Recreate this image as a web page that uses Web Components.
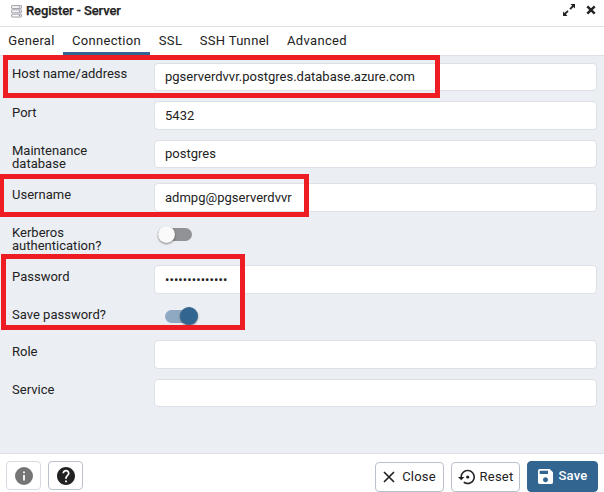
<!DOCTYPE html>
<html lang="en">
<head>
<meta charset="utf-8">
<title>Register - Server</title>
<style>
html,body{margin:0;height:100%;overflow:hidden;background:#fff}
body{font:13px/13px Roboto,sans-serif;letter-spacing:.01px;color:#222}
</style>
</head>
<body>
<register-dialog></register-dialog>
<script>
const define = (name, html, setup) => customElements.define(name, class extends HTMLElement {
  connectedCallback() {
    if (this.shadowRoot) return;
    const t = document.createElement('template');
    t.innerHTML = html;
    this.attachShadow({mode: 'open'}).append(t.content.cloneNode(true));
    if (setup) setup(this, this.shadowRoot);
  }
});

define('dialog-header', `<style>
:host{display:flex;height:26px;border-bottom:1px solid #dde0e6;box-sizing:content-box;align-items:center;padding:0 8px 0 10px;background:#fff}
.t{font-weight:500;margin-left:3px;flex:1;letter-spacing:-.12px;padding-bottom:5px;-webkit-text-stroke:.25px #222}
svg{display:block}
.s{margin-top:-3px}.e{margin:-6px 11px 0 0}.x{margin-top:-6px}
</style>
<svg class="s" width="13" height="13" viewBox="0 0 13 13"><g fill="#e6e6eb" stroke="#a6a6ae"><rect x="1.5" y=".5" width="10" height="3" rx=".6"/><rect x="1.5" y="4.8" width="10" height="3" rx=".6"/><rect x="1.5" y="9.1" width="10" height="3" rx=".6"/></g><path d="M3 2h5M3 6.3h5M3 10.6h5" stroke="#fff"/><path d="M9 2h1M9 6.3h1M9 10.6h1" stroke="#888891"/></svg>
<span class="t"><slot></slot></span>
<svg class="e" width="12" height="12" viewBox="0 0 12 12" fill="#222"><path d="M7.500 0H12v4.500l-1.500-1.500-2.800 2.800-1.300-1.300 2.700-2.800zM4.500 12H0V7.500L1.500 9l2.800-2.800 1.300 1.300L2.900 10.300z"/></svg>
<svg class="x" width="10" height="10" viewBox="0 0 10 10"><path d="M1.300 1.300l7.400 7.400m0-7.400l-7.400 7.400" stroke="#222" stroke-width="2.4"/></svg>`);

define('tab-item', `<style>
:host{display:flex;box-sizing:border-box;height:28px;align-items:center;justify-content:center;border-bottom:3px solid transparent;padding-top:2px;white-space:nowrap;letter-spacing:.33px}
:host([active]){border-color:#326690}
</style><slot></slot>`);

define('tab-bar', `<style>:host{display:flex;height:28px;background:#fff;border-bottom:1px solid #dde0e6}</style><slot></slot>`);

define('form-row', `<style>
:host{display:grid;grid-template-columns:142px 443px;align-items:start}
label{padding-top:var(--lp,4px);white-space:pre-line}
</style><label></label><slot></slot>`, (h, r) => {
  r.querySelector('label').textContent = h.getAttribute('label');
});

define('text-field', `<style>
:host{display:flex;align-items:center;box-sizing:border-box;height:29px;background:#fff;border:1px solid #dde0e6;border-radius:4px;padding:0 10px}
:host([short]){height:28px;padding-bottom:1px}
:host([secret]){letter-spacing:.07px}
</style><slot></slot>`);

define('toggle-switch', `<style>
:host{display:flex;align-items:center;width:32px;height:18px;margin:3px 0 0 4px}
.k{flex:1;height:13px;border-radius:7px;background:#919295;margin-left:3px;margin-right:-2px}
.b{width:17px;height:17px;border-radius:50%;background:#fafafa;box-shadow:0 1px 2px #0007;margin-right:-20px;z-index:1}
:host([on]) .k{background:#8fa9c3;margin:0}
:host([on]) .b{background:#326690;margin:0 -1px 0 -17px;width:18px;height:18px}
:host([on]){margin-left:11px}
</style><span class="b"></span><span class="k"></span>`, (h, r) => {
  if (h.hasAttribute('on')) r.append(r.querySelector('.b'));
});

define('action-button', `<style>
:host{display:flex;box-sizing:border-box;height:30px;border:1px solid #bac1cd;border-radius:4px;align-items:center;justify-content:center;gap:7px;background:#fff;letter-spacing:.2px;padding-bottom:2px}
:host([primary]){background:#326690;border-color:#326690;color:#fff;height:31px;font-weight:500}
:host([muted]){border-color:#d8dbe2}
:host([square]){padding:0}
::slotted(svg){display:block;flex:none}
</style><slot name="icon"></slot><slot></slot>`);

define('dialog-footer', `<style>
:host{display:flex;box-sizing:border-box;height:39px;border-top:1px solid #dde0e6;background:#fff;padding:7px 6px 0;align-items:flex-start}
</style><slot></slot>`);

define('highlight-box', `<style>:host{position:absolute;box-sizing:border-box;border:5px solid #ee1c23;z-index:3}</style>`);

define('register-dialog', `<style>
:host{display:flex;flex-direction:column;position:relative;width:604px;height:492px;overflow:hidden}
main{flex:1;background:#ebeef3;padding:7px 0 0 12px;display:grid;grid-template-rows:38px 39px 43px 39px 43px 39px 36px 39px 38px;align-content:start}
</style>
<dialog-header>Register - Server</dialog-header>
<tab-bar>
<tab-item style="width:63px">General</tab-item><tab-item active style="width:87px">Connection</tab-item><tab-item style="width:41px">SSL</tab-item><tab-item style="width:87px">SSH Tunnel</tab-item><tab-item style="width:78px">Advanced</tab-item>
</tab-bar>
<main>
<form-row label="Host name/address"><text-field short>pgserverdvvr.postgres.database.azure.com</text-field></form-row>
<form-row label="Port" style="--lp:5px"><text-field>5432</text-field></form-row>
<form-row label="Maintenance
database"><text-field short>postgres</text-field></form-row>
<form-row label="Username" style="--lp:5px"><text-field>admpg@pgserverdvvr</text-field></form-row>
<form-row label="Kerberos
authentication?"><toggle-switch></toggle-switch></form-row>
<form-row label="Password" style="--lp:5px"><text-field secret>••••••••••••••</text-field></form-row>
<form-row label="Save password?"><toggle-switch on></toggle-switch></form-row>
<form-row label="Role" style="--lp:5px"><text-field></text-field></form-row>
<form-row label="Service"><text-field short></text-field></form-row>
</main>
<dialog-footer>
<action-button muted square style="width:35px;height:29px"><svg slot="icon" width="18" height="18" viewBox="2 2 20 20"><path fill="#757575" d="M12 2a10 10 0 100 20 10 10 0 000-20zm1 15h-2v-6h2zm0-8h-2V7h2z"/></svg></action-button>
<action-button square style="width:35px;height:29px;margin-left:7px"><svg slot="icon" width="18" height="18" viewBox="2 2 20 20"><path fill="#222" d="M12 2C6.48 2 2 6.48 2 12s4.48 10 10 10 10-4.48 10-10S17.52 2 12 2zm1 17h-2v-2h2v2zm2.07-7.75l-.9.92C13.45 12.9 13 13.5 13 15h-2v-.5c0-1.1.45-2.1 1.17-2.83l1.24-1.26c.37-.36.59-.86.59-1.41 0-1.1-.9-2-2-2s-2 .9-2 2H8c0-2.21 1.79-4 4-4s4 1.79 4 4c0 .88-.36 1.68-.93 2.25z"/></svg></action-button>
<action-button style="width:69px;margin:1px 7px 0 auto"><svg slot="icon" width="12" height="12" viewBox="0 0 12 12" style="margin-top:2px"><path d="M1 1l10 10m0-10L1 11" stroke="#222" stroke-width="1.7"/></svg>Close</action-button>
<action-button style="width:69px;margin:1px 7px 0 0;gap:5px"><svg slot="icon" width="17" height="16" viewBox="0 2.5 21 19" style="margin-top:2px"><path fill="#222" d="M14 12c0-1.1-.9-2-2-2s-2 .9-2 2 .9 2 2 2 2-.9 2-2zm-2-9c-4.970 0-9 4.030-9 9H0l4 4 4-4H5c0-3.870 3.130-7 7-7s7 3.130 7 7-3.130 7-7 7c-1.510 0-2.910-.49-4.060-1.300l-1.420 1.440C8.040 20.300 9.940 21 12 21c4.970 0 9-4.030 9-9s-4.030-9-9-9z"/></svg>Reset</action-button>
<action-button primary style="width:71px;gap:6px"><svg slot="icon" width="15" height="15" viewBox="3 3 18 18" style="margin-top:2px"><path fill="#fff" d="M17 3H5a2 2 0 00-2 2v14c0 1.100.89 2 2 2h14c1.100 0 2-.9 2-2V7l-4-4zm-5 16c-1.660 0-3-1.340-3-3s1.340-3 3-3 3 1.340 3 3-1.340 3-3 3zm3-10H5V5h10v4z"/></svg>Save</action-button>
</dialog-footer>
<highlight-box style="left:3px;top:55px;width:437px;height:43px"></highlight-box>
<highlight-box style="left:-1px;top:174px;width:310px;height:43px"></highlight-box>
<highlight-box style="left:1px;top:254px;width:244px;height:76px"></highlight-box>`);
</script>
</body>
</html>
